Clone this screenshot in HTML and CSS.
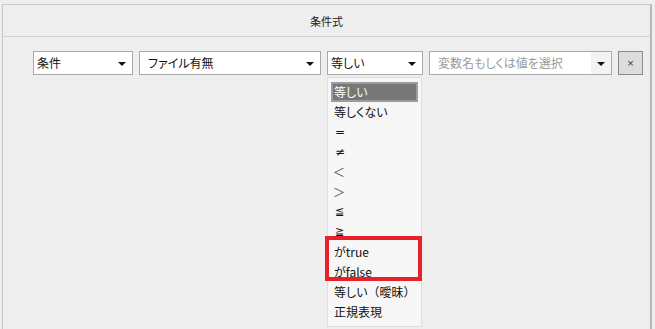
FILE: index.html
```html
<!DOCTYPE html>
<html lang="ja">
<head>
<meta charset="utf-8">
<title>条件式</title>
<link rel="stylesheet" href="styles.css">
</head>
<body>
<div class="panel">
  <div class="panel-header">条件式</div>
  <div class="panel-body">
    <div class="row">
      <div class="select s1"><span class="val">条件</span><span class="arrow"></span></div>
      <div class="select s2"><span class="val pad">ファイル有無</span><span class="arrow"></span></div>
      <div class="select s3 open"><span class="val">等しい</span><span class="arrow"></span>
        <ul class="dropdown">
          <li class="sel">等しい</li>
          <li>等しくない</li>
          <li class="sym">=</li>
          <li class="sym">≠</li>
          <li class="thin">＜</li>
          <li class="thin">＞</li>
          <li class="sym2">≦</li>
          <li class="sym2">≧</li>
          <li>がtrue</li>
          <li>がfalse</li>
          <li>等しい<span class="full">（曖昧）</span></li>
          <li>正規表現</li>
        </ul>
        <div class="highlight"></div>
      </div>
      <div class="select s4"><span class="val pad placeholder">変数名もしくは値を選択</span><span class="arrow grey"></span></div>
      <button class="remove">×</button>
    </div>
  </div>
</div>
</body>
</html>
```

FILE: styles.css
```css
html, body {
  margin: 0;
  padding: 0;
}
body {
  background: #eeeeee;
  font-family: "Noto Sans CJK JP", "Noto Sans", sans-serif;
  font-feature-settings: "palt";
  font-size: 12px;
  color: #111;
  width: 655px;
  height: 329px;
  overflow: hidden;
}
.panel {
  margin: 4px 3px 0 2px;
  border: 1px solid #c8c8c8;
  border-right: 2px solid #b8b8b8;
  border-bottom: none;
  height: 330px;
  background: #eeeeee;
}
.panel-header {
  height: 31px;
  border-bottom: 1px solid #d4d4d4;
  display: flex;
  align-items: center;
  justify-content: center;
  font-size: 11px;
  color: #222;
}
.panel-body {
  padding: 14px 0 0 30px;
}
.row {
  display: flex;
  gap: 6px;
  align-items: stretch;
}
.select {
  position: relative;
  height: 24px;
  box-sizing: border-box;
  border: 1px solid #a9a9a9;
  background: #fff;
  display: flex;
  align-items: center;
}
.s1 { width: 100px; }
.s2 { width: 182px; }
.s3 { width: 96px; }
.s4 { width: 183px; }
.val {
  flex: 1;
  padding-left: 3px;
  white-space: nowrap;
  line-height: 22px;
}
.val.pad { padding-left: 8px; }
.placeholder { color: #9a9a9a; }
.arrow {
  width: 20px;
  height: 22px;
  display: flex;
  align-items: center;
  justify-content: center;
}
.arrow::before {
  content: "";
  border-left: 4px solid transparent;
  border-right: 4px solid transparent;
  border-top: 4px solid #111;
  margin-top: 1px;
}
.arrow.grey { background: #f3f3f3; }
.remove {
  width: 25px;
  height: 24px;
  box-sizing: border-box;
  border: 1px solid #8a8a8a;
  background: #dcdcdc;
  padding: 0;
  font-family: "DejaVu Sans", sans-serif;
  font-size: 9px;
  color: #333;
}
.dropdown {
  position: absolute;
  left: -1px;
  top: 25px;
  width: 95px;
  box-sizing: border-box;
  margin: 0;
  padding: 4px 3px;
  list-style: none;
  background: #f7f7f7;
  border: 1px solid #dedede;
  z-index: 2;
}
.dropdown li {
  height: 20px;
  line-height: 20px;
  padding-left: 3px;
  box-sizing: border-box;
  white-space: nowrap;
  color: #111;
}
.dropdown li.sel {
  background: #777777;
  color: #fff;
  border: 2px solid #9d9d9d;
  line-height: 16px;
  padding-left: 1px;
}
.dropdown li.sym {
  font-family: "DejaVu Sans", sans-serif;
  font-size: 12px;
  padding-left: 4px;
}
.dropdown li.sym2 {
  font-family: "DejaVu Sans", sans-serif;
  font-size: 11px;
  padding-left: 4px;
}
.dropdown li.thin {
  color: #555;
  font-feature-settings: normal;
  margin-left: -1px;
}
.full { font-feature-settings: normal; }
.highlight {
  position: absolute;
  left: -3px;
  top: 184px;
  width: 97px;
  height: 45px;
  box-sizing: border-box;
  border: 4px solid #e8202a;
  z-index: 3;
}
```
